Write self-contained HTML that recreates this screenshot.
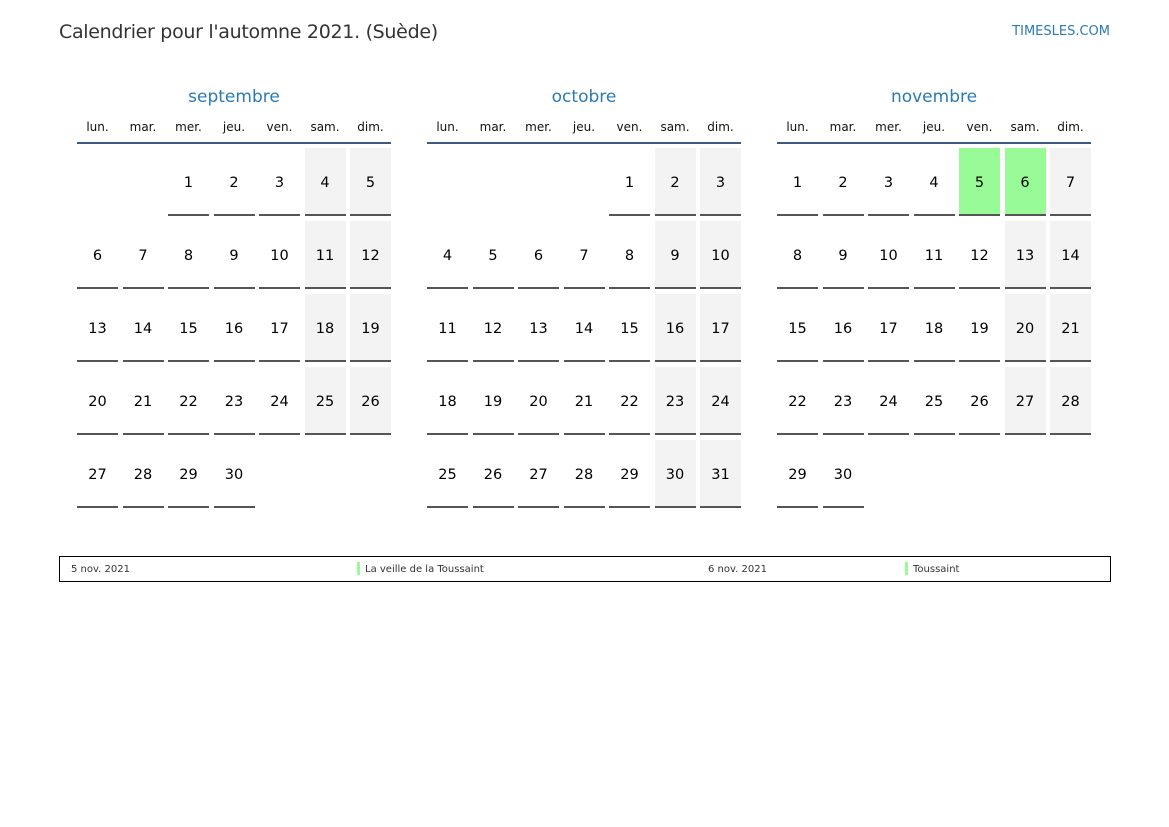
<!DOCTYPE html>
<html><head><meta charset="utf-8"><style>
*{margin:0;padding:0;box-sizing:border-box}
body{width:1169px;height:827px;background:#fff;font-family:"DejaVu Sans","Liberation Sans",sans-serif;position:relative;overflow:hidden;color:#000}
.title{position:absolute;left:59px;top:21px;font-size:19px;color:#333;letter-spacing:-0.3px}
.site{position:absolute;right:59px;top:24px;font-size:13px;color:#2a7ab8}
.m{position:absolute;top:86px;width:314px}
.mt{text-align:center;font-size:17px;color:#2a7ab8;height:24px;line-height:22px}
.wd{display:grid;grid-template-columns:repeat(7,41px);column-gap:4.5px;font-size:12px;text-align:center;margin-top:10px;height:22px;line-height:14px;color:#111}
.hl{height:2px;background:#3c5a80}
.g{display:grid;grid-template-columns:repeat(7,41px);column-gap:4.5px;row-gap:5px;margin-top:4px}
.g div{height:68px;line-height:70px;text-align:center;font-size:14.5px;border-bottom:2px solid #555}
.g div.e{border:none}
.g div.w{background:#f3f3f3}
.g div.h{background:#98fb98}
.leg{position:absolute;left:59px;top:556px;width:1052px;height:26px;border:1px solid #000;font-size:10px;color:#333}
.leg span{position:absolute;top:7px}
.bar{position:absolute;top:5px;width:3px;height:13px;background:#98fb98}
</style></head><body>
<div class="title">Calendrier pour l'automne 2021. (Suède)</div>
<div class="site">TIMESLES.COM</div>

<div class="m" style="left:77px">
<div class="mt">septembre</div>
<div class="wd"><span>lun.</span><span>mar.</span><span>mer.</span><span>jeu.</span><span>ven.</span><span>sam.</span><span>dim.</span></div>
<div class="hl"></div>
<div class="g">
<div class="e"></div><div class="e"></div><div>1</div><div>2</div><div>3</div><div class="w">4</div><div class="w">5</div>
<div>6</div><div>7</div><div>8</div><div>9</div><div>10</div><div class="w">11</div><div class="w">12</div>
<div>13</div><div>14</div><div>15</div><div>16</div><div>17</div><div class="w">18</div><div class="w">19</div>
<div>20</div><div>21</div><div>22</div><div>23</div><div>24</div><div class="w">25</div><div class="w">26</div>
<div>27</div><div>28</div><div>29</div><div>30</div>
</div></div>

<div class="m" style="left:427px">
<div class="mt">octobre</div>
<div class="wd"><span>lun.</span><span>mar.</span><span>mer.</span><span>jeu.</span><span>ven.</span><span>sam.</span><span>dim.</span></div>
<div class="hl"></div>
<div class="g">
<div class="e"></div><div class="e"></div><div class="e"></div><div class="e"></div><div>1</div><div class="w">2</div><div class="w">3</div>
<div>4</div><div>5</div><div>6</div><div>7</div><div>8</div><div class="w">9</div><div class="w">10</div>
<div>11</div><div>12</div><div>13</div><div>14</div><div>15</div><div class="w">16</div><div class="w">17</div>
<div>18</div><div>19</div><div>20</div><div>21</div><div>22</div><div class="w">23</div><div class="w">24</div>
<div>25</div><div>26</div><div>27</div><div>28</div><div>29</div><div class="w">30</div><div class="w">31</div>
</div></div>

<div class="m" style="left:777px">
<div class="mt">novembre</div>
<div class="wd"><span>lun.</span><span>mar.</span><span>mer.</span><span>jeu.</span><span>ven.</span><span>sam.</span><span>dim.</span></div>
<div class="hl"></div>
<div class="g">
<div>1</div><div>2</div><div>3</div><div>4</div><div class="h">5</div><div class="h">6</div><div class="w">7</div>
<div>8</div><div>9</div><div>10</div><div>11</div><div>12</div><div class="w">13</div><div class="w">14</div>
<div>15</div><div>16</div><div>17</div><div>18</div><div>19</div><div class="w">20</div><div class="w">21</div>
<div>22</div><div>23</div><div>24</div><div>25</div><div>26</div><div class="w">27</div><div class="w">28</div>
<div>29</div><div>30</div>
</div></div>

<div class="leg">
<span style="left:11px">5 nov. 2021</span>
<div class="bar" style="left:297px"></div><span style="left:305px">La veille de la Toussaint</span>
<span style="left:648px">6 nov. 2021</span>
<div class="bar" style="left:845px"></div><span style="left:853px">Toussaint</span>
</div>
</body></html>
